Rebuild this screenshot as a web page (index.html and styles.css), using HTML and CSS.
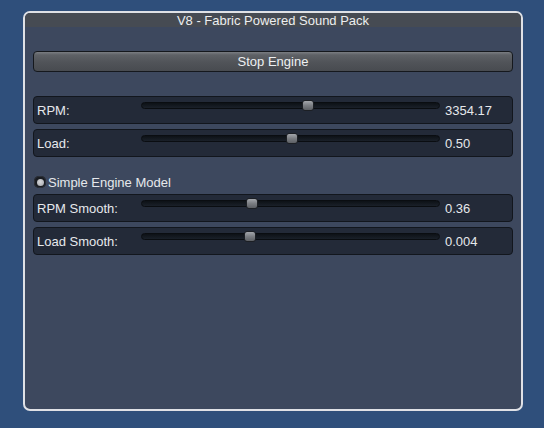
FILE: index.html
```html
<!DOCTYPE html>
<html>
<head>
<meta charset="utf-8">
<link rel="stylesheet" href="styles.css">
</head>
<body>
<div class="window">
  <div class="title">V8 - Fabric Powered Sound Pack</div>
  <div class="content">
    <div class="button">Stop Engine</div>
    <div class="group first">
      <div class="row">
        <span class="label">RPM:</span>
        <div class="track"><div class="thumb" style="left:161px"></div></div>
        <span class="value">3354.17</span>
      </div>
      <div class="row">
        <span class="label">Load:</span>
        <div class="track"><div class="thumb" style="left:145px"></div></div>
        <span class="value">0.50</span>
      </div>
    </div>
    <div class="radio-line"><span class="radio"><span class="dot"></span></span><span>Simple Engine Model</span></div>
    <div class="group">
      <div class="row">
        <span class="label">RPM Smooth:</span>
        <div class="track"><div class="thumb" style="left:105px"></div></div>
        <span class="value">0.36</span>
      </div>
      <div class="row">
        <span class="label">Load Smooth:</span>
        <div class="track"><div class="thumb" style="left:103px"></div></div>
        <span class="value">0.004</span>
      </div>
    </div>
  </div>
</div>
</body>
</html>
```
FILE: styles.css
```css
html, body {
  margin: 0;
  padding: 0;
  background: #2f4f7b;
  width: 544px;
  height: 428px;
  overflow: hidden;
}
body {
  font-family: "Liberation Sans", Arial, sans-serif;
  font-size: 13px;
  color: #e6e8ec;
}
.window {
  margin: 11px 0 0 23px;
  width: 496px;
  height: 396px;
  border: 2px solid #dfe1e6;
  border-radius: 7px;
  background: #3d485e;
  overflow: hidden;
}
.title {
  height: 14px;
  line-height: 15px;
  background: #464b53;
  text-align: center;
  color: #eceef0;
}
.content {
  padding: 24px 8px 0 8px;
}
.button {
  height: 19px;
  line-height: 19px;
  border: 1px solid #15181d;
  border-radius: 4px;
  background: linear-gradient(#7a7d82 0px, #5e6166 3px, #515459 10px, #484b50 19px);
  text-align: center;
  color: #eef0f2;
}
.group {
  display: flex;
  flex-direction: column;
  gap: 5px;
}
.group.first {
  margin-top: 24px;
}
.row {
  height: 26px;
  border: 1px solid #12161d;
  border-radius: 4px;
  background: #232a38;
  display: flex;
  align-items: center;
}
.label {
  width: 104px;
  padding-left: 3px;
  flex: none;
}
.track {
  position: relative;
  align-self: flex-start;
  margin-top: 5px;
  width: 297px;
  height: 5px;
  border: 1px solid #0a0d11;
  border-radius: 4px;
  background: linear-gradient(#0d1116, #1a2029);
  flex: none;
}
.value {
  margin-left: 5px;
}
.thumb {
  position: absolute;
  top: -3px;
  margin-left: -1px;
  width: 10px;
  height: 9px;
  border: 1px solid #1c1f24;
  border-radius: 3px;
  background: linear-gradient(#a3a6ab, #7a7d82 50%, #5c5f64);
}
.radio-line {
  margin-top: 16px;
  height: 18px;
  margin-bottom: 3px;
  display: flex;
  align-items: center;
}
.radio {
  width: 12px;
  height: 12px;
  margin-left: 1px;
  margin-right: 2px;
  border-radius: 5px;
  background: #191c22;
  border: 0;
  box-shadow: inset 0 0 0 1px #2c3038;
  display: flex;
  align-items: center;
  justify-content: center;
}
.dot {
  width: 7px;
  height: 7px;
  border-radius: 50%;
  background: radial-gradient(circle at 45% 40%, #d8d9dc, #9fa2a7);
}
```
